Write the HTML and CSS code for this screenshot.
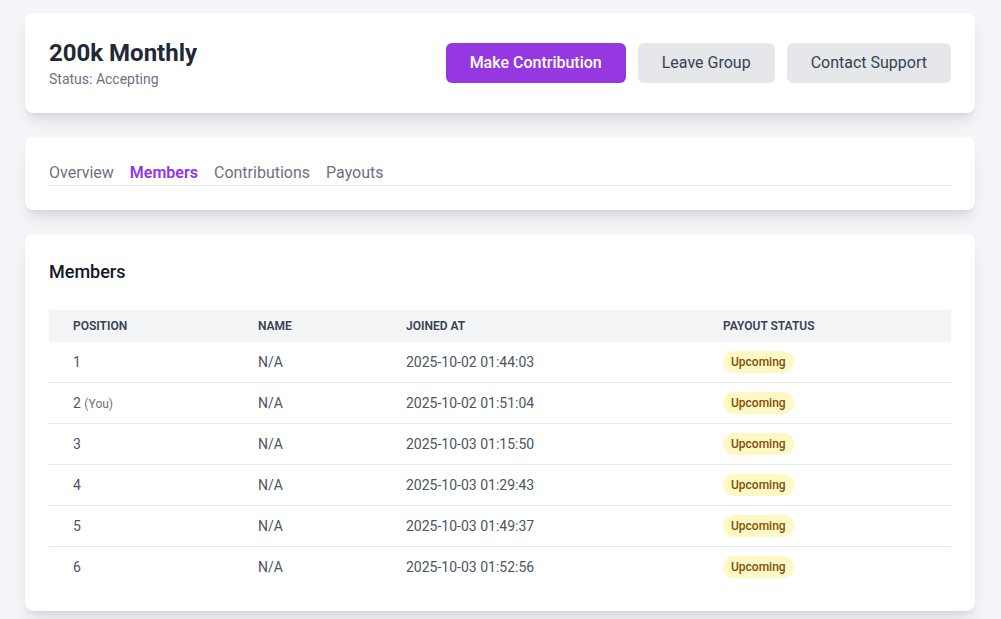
FILE: index.html
```html
<!DOCTYPE html>
<html lang="en">
<head>
<meta charset="utf-8">
<title>200k Monthly</title>
<link rel="stylesheet" href="styles.css">
</head>
<body>
<main class="page">
  <section class="card header-card">
    <div class="group-info">
      <h1 class="group-title">200k Monthly</h1>
      <p class="group-status">Status: Accepting</p>
    </div>
    <div class="actions">
      <button class="btn btn-primary">Make Contribution</button>
      <button class="btn btn-secondary">Leave Group</button>
      <button class="btn btn-secondary">Contact Support</button>
    </div>
  </section>

  <section class="card tabs-card">
    <nav class="tabs">
      <a class="tab">Overview</a>
      <a class="tab tab-active">Members</a>
      <a class="tab">Contributions</a>
      <a class="tab">Payouts</a>
    </nav>
  </section>

  <section class="card members-card">
    <h2 class="section-title">Members</h2>
    <table class="members-table">
      <thead>
        <tr>
          <th class="col-pos">Position</th>
          <th class="col-name">Name</th>
          <th class="col-joined">Joined At</th>
          <th class="col-status">Payout Status</th>
        </tr>
      </thead>
      <tbody>
        <tr><td>1</td><td>N/A</td><td>2025-10-02 01:44:03</td><td><span class="badge">Upcoming</span></td></tr>
        <tr><td>2 <span class="you">(You)</span></td><td>N/A</td><td>2025-10-02 01:51:04</td><td><span class="badge">Upcoming</span></td></tr>
        <tr><td>3</td><td>N/A</td><td>2025-10-03 01:15:50</td><td><span class="badge">Upcoming</span></td></tr>
        <tr><td>4</td><td>N/A</td><td>2025-10-03 01:29:43</td><td><span class="badge">Upcoming</span></td></tr>
        <tr><td>5</td><td>N/A</td><td>2025-10-03 01:49:37</td><td><span class="badge">Upcoming</span></td></tr>
        <tr><td>6</td><td>N/A</td><td>2025-10-03 01:52:56</td><td><span class="badge">Upcoming</span></td></tr>
      </tbody>
    </table>
  </section>
</main>
</body>
</html>
```

FILE: styles.css
```css
* { box-sizing: border-box; }

html, body {
  margin: 0;
  padding: 0;
  background: #f4f5f9;
  font-family: Roboto, "Liberation Sans", Arial, sans-serif;
  color: #1f2937;
}

.page {
  padding: 13px 26px 24px 25px;
  display: flex;
  flex-direction: column;
  gap: 24px;
}

.card {
  background: #ffffff;
  border-radius: 8px;
  padding: 24px;
  box-shadow: 0 10px 15px -3px rgba(0, 0, 0, 0.1), 0 4px 6px -4px rgba(0, 0, 0, 0.1);
}

.header-card {
  display: flex;
  align-items: center;
  justify-content: space-between;
}

.group-title {
  margin: 0;
  font-size: 24px;
  line-height: 32px;
  font-weight: 700;
  color: #1f2937;
}

.group-status {
  margin: 0;
  font-size: 14px;
  line-height: 20px;
  color: #6b7280;
}

.actions {
  display: flex;
  gap: 12px;
}

.btn {
  font-family: inherit;
  font-size: 16px;
  line-height: 24px;
  padding: 8px 24px;
  border: none;
  border-radius: 6px;
  cursor: pointer;
}

.btn-primary {
  background: #9538e1;
  color: #ffffff;
  font-weight: 500;
}

.btn-secondary {
  background: #e5e7eb;
  color: #374151;
  font-weight: 400;
}

.tabs {
  display: flex;
  gap: 16px;
  border-bottom: 1px solid #e5e7eb;
}

.tab {
  font-size: 16px;
  line-height: 24px;
  color: #6b7280;
  text-decoration: none;
}

.tab-active {
  color: #9333ea;
  font-weight: 600;
}

.section-title {
  margin: 0 0 24px;
  font-size: 18px;
  line-height: 28px;
  font-weight: 500;
  color: #111827;
}

.members-table {
  width: 100%;
  border-collapse: separate;
  border-spacing: 0;
}

.members-table th {
  background: #f3f4f6;
  text-align: left;
  font-size: 12px;
  line-height: 16px;
  font-weight: 600;
  text-transform: uppercase;
  color: #374151;
  padding: 8px 24px;
}

.col-pos { width: 185px; }
.col-name { width: 148px; }
.col-joined { width: 317px; }

.members-table td {
  font-size: 14px;
  line-height: 20px;
  color: #4b5563;
  padding: 10px 24px;
  border-bottom: 1px solid #e5e7eb;
}

.members-table tbody tr:last-child td {
  border-bottom: none;
}

.you {
  font-size: 12px;
  line-height: 1;
  color: #6b7280;
}

.badge {
  display: inline-block;
  vertical-align: top;
  margin: -1px 0;
  padding: 3px 8px;
  border-radius: 9999px;
  background: #fef9c3;
  color: #854d0e;
  font-size: 12px;
  line-height: 16px;
  font-weight: 500;
}
```
